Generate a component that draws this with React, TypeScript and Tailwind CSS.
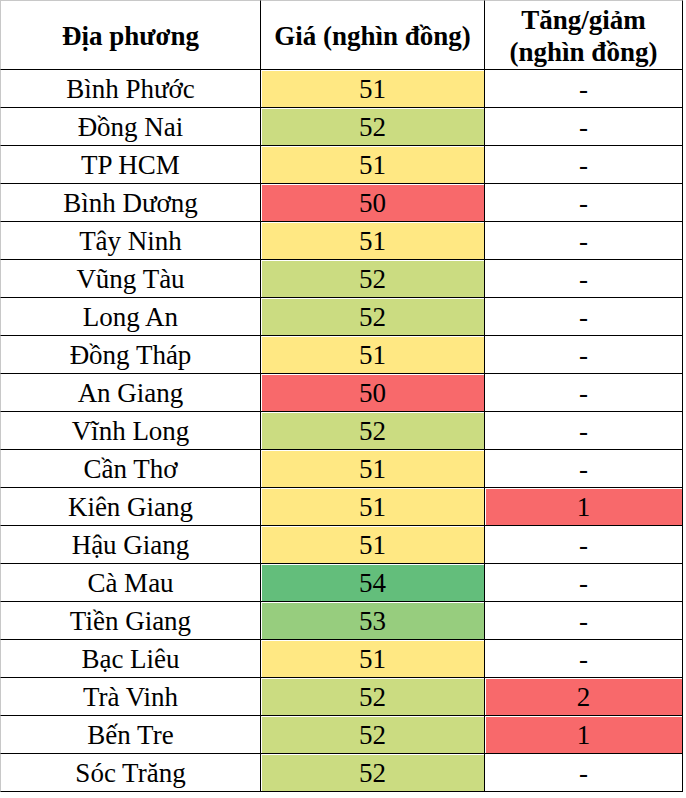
type Row = { place: string; price: number; change: string };

const rows: Row[] = [
  { place: "Bình Phước", price: 51, change: "-" },
  { place: "Đồng Nai", price: 52, change: "-" },
  { place: "TP HCM", price: 51, change: "-" },
  { place: "Bình Dương", price: 50, change: "-" },
  { place: "Tây Ninh", price: 51, change: "-" },
  { place: "Vũng Tàu", price: 52, change: "-" },
  { place: "Long An", price: 52, change: "-" },
  { place: "Đồng Tháp", price: 51, change: "-" },
  { place: "An Giang", price: 50, change: "-" },
  { place: "Vĩnh Long", price: 52, change: "-" },
  { place: "Cần Thơ", price: 51, change: "-" },
  { place: "Kiên Giang", price: 51, change: "1" },
  { place: "Hậu Giang", price: 51, change: "-" },
  { place: "Cà Mau", price: 54, change: "-" },
  { place: "Tiền Giang", price: 53, change: "-" },
  { place: "Bạc Liêu", price: 51, change: "-" },
  { place: "Trà Vinh", price: 52, change: "2" },
  { place: "Bến Tre", price: 52, change: "1" },
  { place: "Sóc Trăng", price: 52, change: "-" },
];

const priceBg: Record<number, string> = {
  50: "bg-[#f8696b]",
  51: "bg-[#ffe883]",
  52: "bg-[#cbdc81]",
  53: "bg-[#97cd7e]",
  54: "bg-[#63be7b]",
};

export default function App() {
  return (
    <div className="min-h-[798px] bg-white font-['Liberation_Serif','Times_New_Roman',serif] text-black">
      <div className="grid w-[683px] grid-cols-[261px_224px_198px]">
        <div className="flex h-[70px] items-center justify-center border-r border-b border-l border-t border-r-black border-b-black border-l-[#c8c8c8] border-t-[#c8c8c8] pt-[3px] text-[27px] font-bold">
          Địa phương
        </div>
        <div className="flex h-[70px] items-center justify-center border-r border-b border-t border-r-black border-b-black border-t-[#c8c8c8] pt-[3px] text-[27px] font-bold">
          Giá (nghìn đồng)
        </div>
        <div className="flex h-[70px] flex-col items-center justify-center border-r border-b border-t border-r-black border-b-black border-t-[#c8c8c8] pt-px text-[27px] font-bold leading-[32px]">
          <span>Tăng/giảm</span>
          <span>(nghìn đồng)</span>
        </div>
        {rows.map((row) => (
          <div key={row.place} className="contents">
            <div className="flex h-[38px] items-center justify-center border-r border-b border-l border-r-black border-b-black border-l-[#c8c8c8] pt-px text-[27px]">
              {row.place}
            </div>
            <div className={`flex h-[38px] items-center justify-center border-r border-b border-black pt-px text-[27px] shadow-[inset_1px_1px_0_#fff] ${priceBg[row.price]}`}>
              {row.price}
            </div>
            <div
              className={`flex h-[38px] items-center justify-center border-r border-b border-black pt-px text-[27px] ${
                row.change === "-" ? "bg-white" : "bg-[#f8696b] shadow-[inset_1px_1px_0_#fff]"
              }`}
            >
              {row.change}
            </div>
          </div>
        ))}
      </div>
    </div>
  );
}
